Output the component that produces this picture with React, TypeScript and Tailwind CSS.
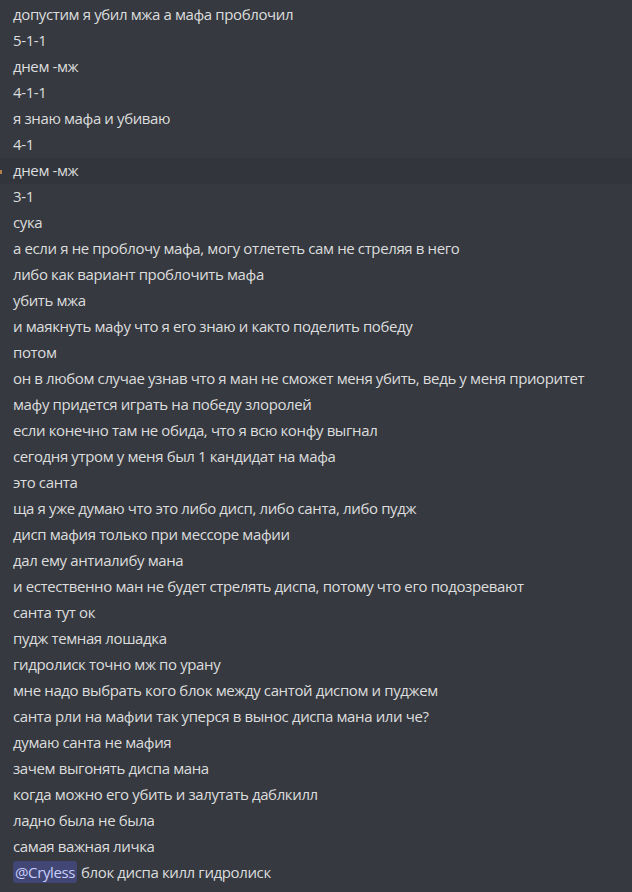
const lines = [
  "допустим я убил мжа а мафа проблочил",
  "5-1-1",
  "днем -мж",
  "4-1-1",
  "я знаю мафа и убиваю",
  "4-1",
  "днем -мж",
  "3-1",
  "сука",
  "а если я не проблочу мафа, могу отлететь сам не стреляя в него",
  "либо как вариант проблочить мафа",
  "убить мжа",
  "и маякнуть мафу что я его знаю и както поделить победу",
  "потом",
  "он в любом случае узнав что я ман не сможет меня убить, ведь у меня приоритет",
  "мафу придется играть на победу злоролей",
  "если конечно там не обида, что я всю конфу выгнал",
  "сегодня утром у меня был 1 кандидат на мафа",
  "это санта",
  "ща я уже думаю что это либо дисп, либо санта, либо пудж",
  "дисп мафия только при мессоре мафии",
  "дал ему антиалибу мана",
  "и естественно ман не будет стрелять диспа, потому что его подозревают",
  "санта тут ок",
  "пудж темная лошадка",
  "гидролиск точно мж по урану",
  "мне надо выбрать кого блок между сантой диспом и пуджем",
  "санта рли на мафии так уперся в вынос диспа мана или че?",
  "думаю санта не мафия",
  "зачем выгонять диспа мана",
  "когда можно его убить и залутать даблкилл",
  "ладно была не была",
  "самая важная личка",
];

export default function App() {
  return (
    <div className="w-[632px] h-[892px] overflow-hidden bg-[#36393f] pt-[2px] text-[15px] leading-[24px] tracking-[-0.38px] text-[#dcddde] font-['Open_Sans',sans-serif]">
      {lines.map((line, i) => (
        <div
          key={i}
          className={
            i === 6
              ? "relative h-[26px] pl-[13px] bg-[#32353b]"
              : "relative h-[26px] pl-[13px]"
          }
        >
          {i === 6 && (
            <span className="absolute left-0 top-[12px] w-[2px] h-[4px] bg-[#b5804a]" />
          )}
          {line}
        </div>
      ))}
      <div className="h-[26px] pl-[13px]">
        <span className="rounded-[3px] bg-[#414675] text-[#c9cdfb] px-[2px] py-[1px] mr-[4px]">
          @Cryless
        </span>
        блок диспа килл гидролиск
      </div>
    </div>
  );
}
